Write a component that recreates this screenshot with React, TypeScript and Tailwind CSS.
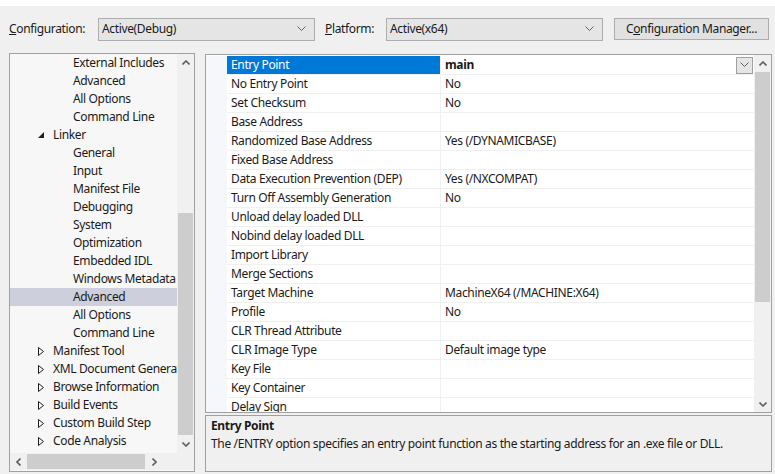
import React from "react";

const ChevDown = ({ className = "" }: { className?: string }) => (
  <svg width="9" height="6" viewBox="0 0 9 6" className={className}>
    <polyline points="0.5,0.5 4.5,4.5 8.5,0.5" fill="none" stroke="#606060" strokeWidth="1" />
  </svg>
);

const SmallUp = () => (
  <svg width="8" height="5" viewBox="0 0 8 5">
    <polyline points="0.5,4.5 4,1 7.5,4.5" fill="none" stroke="#606060" strokeWidth="1.6" />
  </svg>
);
const SmallDown = () => (
  <svg width="8" height="5" viewBox="0 0 8 5">
    <polyline points="0.5,0.5 4,4 7.5,0.5" fill="none" stroke="#606060" strokeWidth="1.6" />
  </svg>
);
const SmallLeft = () => (
  <svg width="5" height="8" viewBox="0 0 5 8">
    <polyline points="4.5,0.5 1,4 4.5,7.5" fill="none" stroke="#606060" strokeWidth="1.6" />
  </svg>
);
const SmallRight = () => (
  <svg width="5" height="8" viewBox="0 0 5 8">
    <polyline points="0.5,0.5 4,4 0.5,7.5" fill="none" stroke="#606060" strokeWidth="1.6" />
  </svg>
);

const Expanded = () => (
  <svg width="6" height="6" viewBox="0 0 6 6">
    <polygon points="6,0 6,6 0,6" fill="#1e1e1e" />
  </svg>
);
const Collapsed = () => (
  <svg width="6" height="9" viewBox="0 0 6 9">
    <polygon points="0.5,0.5 5.5,4.5 0.5,8.5" fill="none" stroke="#1e1e1e" strokeWidth="1" />
  </svg>
);

type TreeItem = { label: string; level: 1 | 2; state?: "open" | "closed"; selected?: boolean };

const tree: TreeItem[] = [
  { label: "External Includes", level: 2 },
  { label: "Advanced", level: 2 },
  { label: "All Options", level: 2 },
  { label: "Command Line", level: 2 },
  { label: "Linker", level: 1, state: "open" },
  { label: "General", level: 2 },
  { label: "Input", level: 2 },
  { label: "Manifest File", level: 2 },
  { label: "Debugging", level: 2 },
  { label: "System", level: 2 },
  { label: "Optimization", level: 2 },
  { label: "Embedded IDL", level: 2 },
  { label: "Windows Metadata", level: 2 },
  { label: "Advanced", level: 2, selected: true },
  { label: "All Options", level: 2 },
  { label: "Command Line", level: 2 },
  { label: "Manifest Tool", level: 1, state: "closed" },
  { label: "XML Document Generator", level: 1, state: "closed" },
  { label: "Browse Information", level: 1, state: "closed" },
  { label: "Build Events", level: 1, state: "closed" },
  { label: "Custom Build Step", level: 1, state: "closed" },
  { label: "Code Analysis", level: 1, state: "closed" },
];

const props: [string, string][] = [
  ["Entry Point", "main"],
  ["No Entry Point", "No"],
  ["Set Checksum", "No"],
  ["Base Address", ""],
  ["Randomized Base Address", "Yes (/DYNAMICBASE)"],
  ["Fixed Base Address", ""],
  ["Data Execution Prevention (DEP)", "Yes (/NXCOMPAT)"],
  ["Turn Off Assembly Generation", "No"],
  ["Unload delay loaded DLL", ""],
  ["Nobind delay loaded DLL", ""],
  ["Import Library", ""],
  ["Merge Sections", ""],
  ["Target Machine", "MachineX64 (/MACHINE:X64)"],
  ["Profile", "No"],
  ["CLR Thread Attribute", ""],
  ["CLR Image Type", "Default image type"],
  ["Key File", ""],
  ["Key Container", ""],
  ["Delay Sign", ""],
];

export default function App() {
  return (
    <div
      className="w-[775px] h-[474px] bg-[#f0f0f0] overflow-hidden text-[12px] tracking-[-0.35px] text-[#1a1a1a] flex flex-col"
      style={{ fontFamily: '"Noto Sans", "Open Sans", sans-serif' }}
    >
      <div className="h-[6px] bg-white shrink-0" />
      {/* toolbar */}
      <div className="h-[22px] mt-[12px] flex items-center shrink-0">
        <span className="ml-[9px] w-[89px]">
          <span className="underline">C</span>onfiguration:
        </span>
        <div className="w-[217px] h-[23px] border border-[#adadad] bg-[#e5e5e5] flex items-center justify-between pl-[3px] pr-[8px]">
          <span>Active(Debug)</span>
          <ChevDown />
        </div>
        <span className="ml-[10px] w-[61px]">
          <span className="underline">P</span>latform:
        </span>
        <div className="w-[217px] h-[23px] border border-[#adadad] bg-[#e5e5e5] flex items-center justify-between pl-[3px] pr-[8px]">
          <span>Active(x64)</span>
          <ChevDown />
        </div>
        <div className="ml-[11px] w-[155px] h-[22px] border border-[#adadad] bg-[#e1e1e1] flex items-center justify-center">
          <span>
            C<span className="underline">o</span>nfiguration Manager...
          </span>
        </div>
      </div>

      {/* main */}
      <div className="flex mt-[13px] ml-[9px] gap-[10px] h-[419px]">
        {/* tree panel */}
        <div className="w-[186px] h-[419px] border border-[#a0a0a0] bg-[#f7f7f7] flex flex-col">
          <div className="flex h-[399px]">
            <div className="w-[167px] overflow-hidden flex flex-col">
              {tree.map((t, i) => (
                <div
                  key={i}
                  className={`h-[18px] shrink-0 flex items-center whitespace-nowrap ${t.selected ? "bg-[#cdd0dc]" : ""}`}
                >
                  {t.level === 1 ? (
                    <>
                      <span className="w-[15px] ml-[28px] shrink-0 flex items-center">
                        {t.state === "open" ? <Expanded /> : <Collapsed />}
                      </span>
                      <span className="shrink-0">{t.label}</span>
                    </>
                  ) : (
                    <span className="ml-[63px] shrink-0">{t.label}</span>
                  )}
                </div>
              ))}
            </div>
            <div className="w-[17px] bg-[#f0f0f0] flex flex-col">
              <div className="h-[17px] flex items-center justify-center">
                <SmallUp />
              </div>
              <div className="h-[142px]" />
              <div className="h-[222px] mx-[1px] bg-[#cdcdcd]" />
              <div className="flex-1 flex items-center justify-center">
                <SmallDown />
              </div>
            </div>
          </div>
          <div className="flex h-[17px] bg-[#f0f0f0]">
            <div className="w-[17px] flex items-center justify-center">
              <SmallLeft />
            </div>
            <div className="w-[118px] my-[1px] bg-[#cdcdcd]" />
            <div className="flex-1" />
            <div className="w-[17px] flex items-center justify-center mr-[14px]">
              <SmallRight />
            </div>
            <div className="w-[17px]" />
          </div>
        </div>

        {/* right */}
        <div className="flex flex-col w-[567px]">
          <div className="h-[359px] mt-[1px] border border-[#a0a0a0] bg-white flex overflow-hidden">
            <div className="flex-1 flex pt-[1px]">
              <div className="w-[21px] bg-[#f5f7fb]" />
              <div className="flex-1 flex flex-col">
                {props.map(([k, v], i) => (
                  <div key={i} className="h-[19px] shrink-0 flex border-b border-[#f0f0f3]">
                    <div
                      className={`w-[214px] pl-[4px] flex items-center border-r border-[#f0f0f3] ${i === 0 ? "bg-[#0078d7] text-white" : ""}`}
                    >
                      {k}
                    </div>
                    <div className="flex-1 pl-[4px] flex items-center justify-between">
                      <span className={i === 0 ? "font-bold" : ""}>{v}</span>
                      {i === 0 && (
                        <div className="w-[17px] h-[17px] mr-[1px] border border-[#a0a0a0] bg-[#e5e5e5] flex items-center justify-center">
                          <ChevDown />
                        </div>
                      )}
                    </div>
                  </div>
                ))}
              </div>
            </div>
            <div className="w-[17px] bg-[#f0f0f0] flex flex-col">
              <div className="h-[17px] flex items-center justify-center">
                <SmallUp />
              </div>
              <div className="h-[230px] mx-[1px] bg-[#cdcdcd]" />
              <div className="flex-1 flex items-end justify-center pb-[5px]">
                <SmallDown />
              </div>
            </div>
          </div>
          <div className="mt-[2px] h-[57px] border border-[#a0a0a0] bg-[#f0f0f0] pl-[5px] pt-[1px]">
            <div className="font-bold h-[18px] flex items-center">Entry Point</div>
            <div className="h-[18px] flex items-center">
              The /ENTRY option specifies an entry point function as the starting address for an .exe file or DLL.
            </div>
          </div>
        </div>
      </div>
    </div>
  );
}
